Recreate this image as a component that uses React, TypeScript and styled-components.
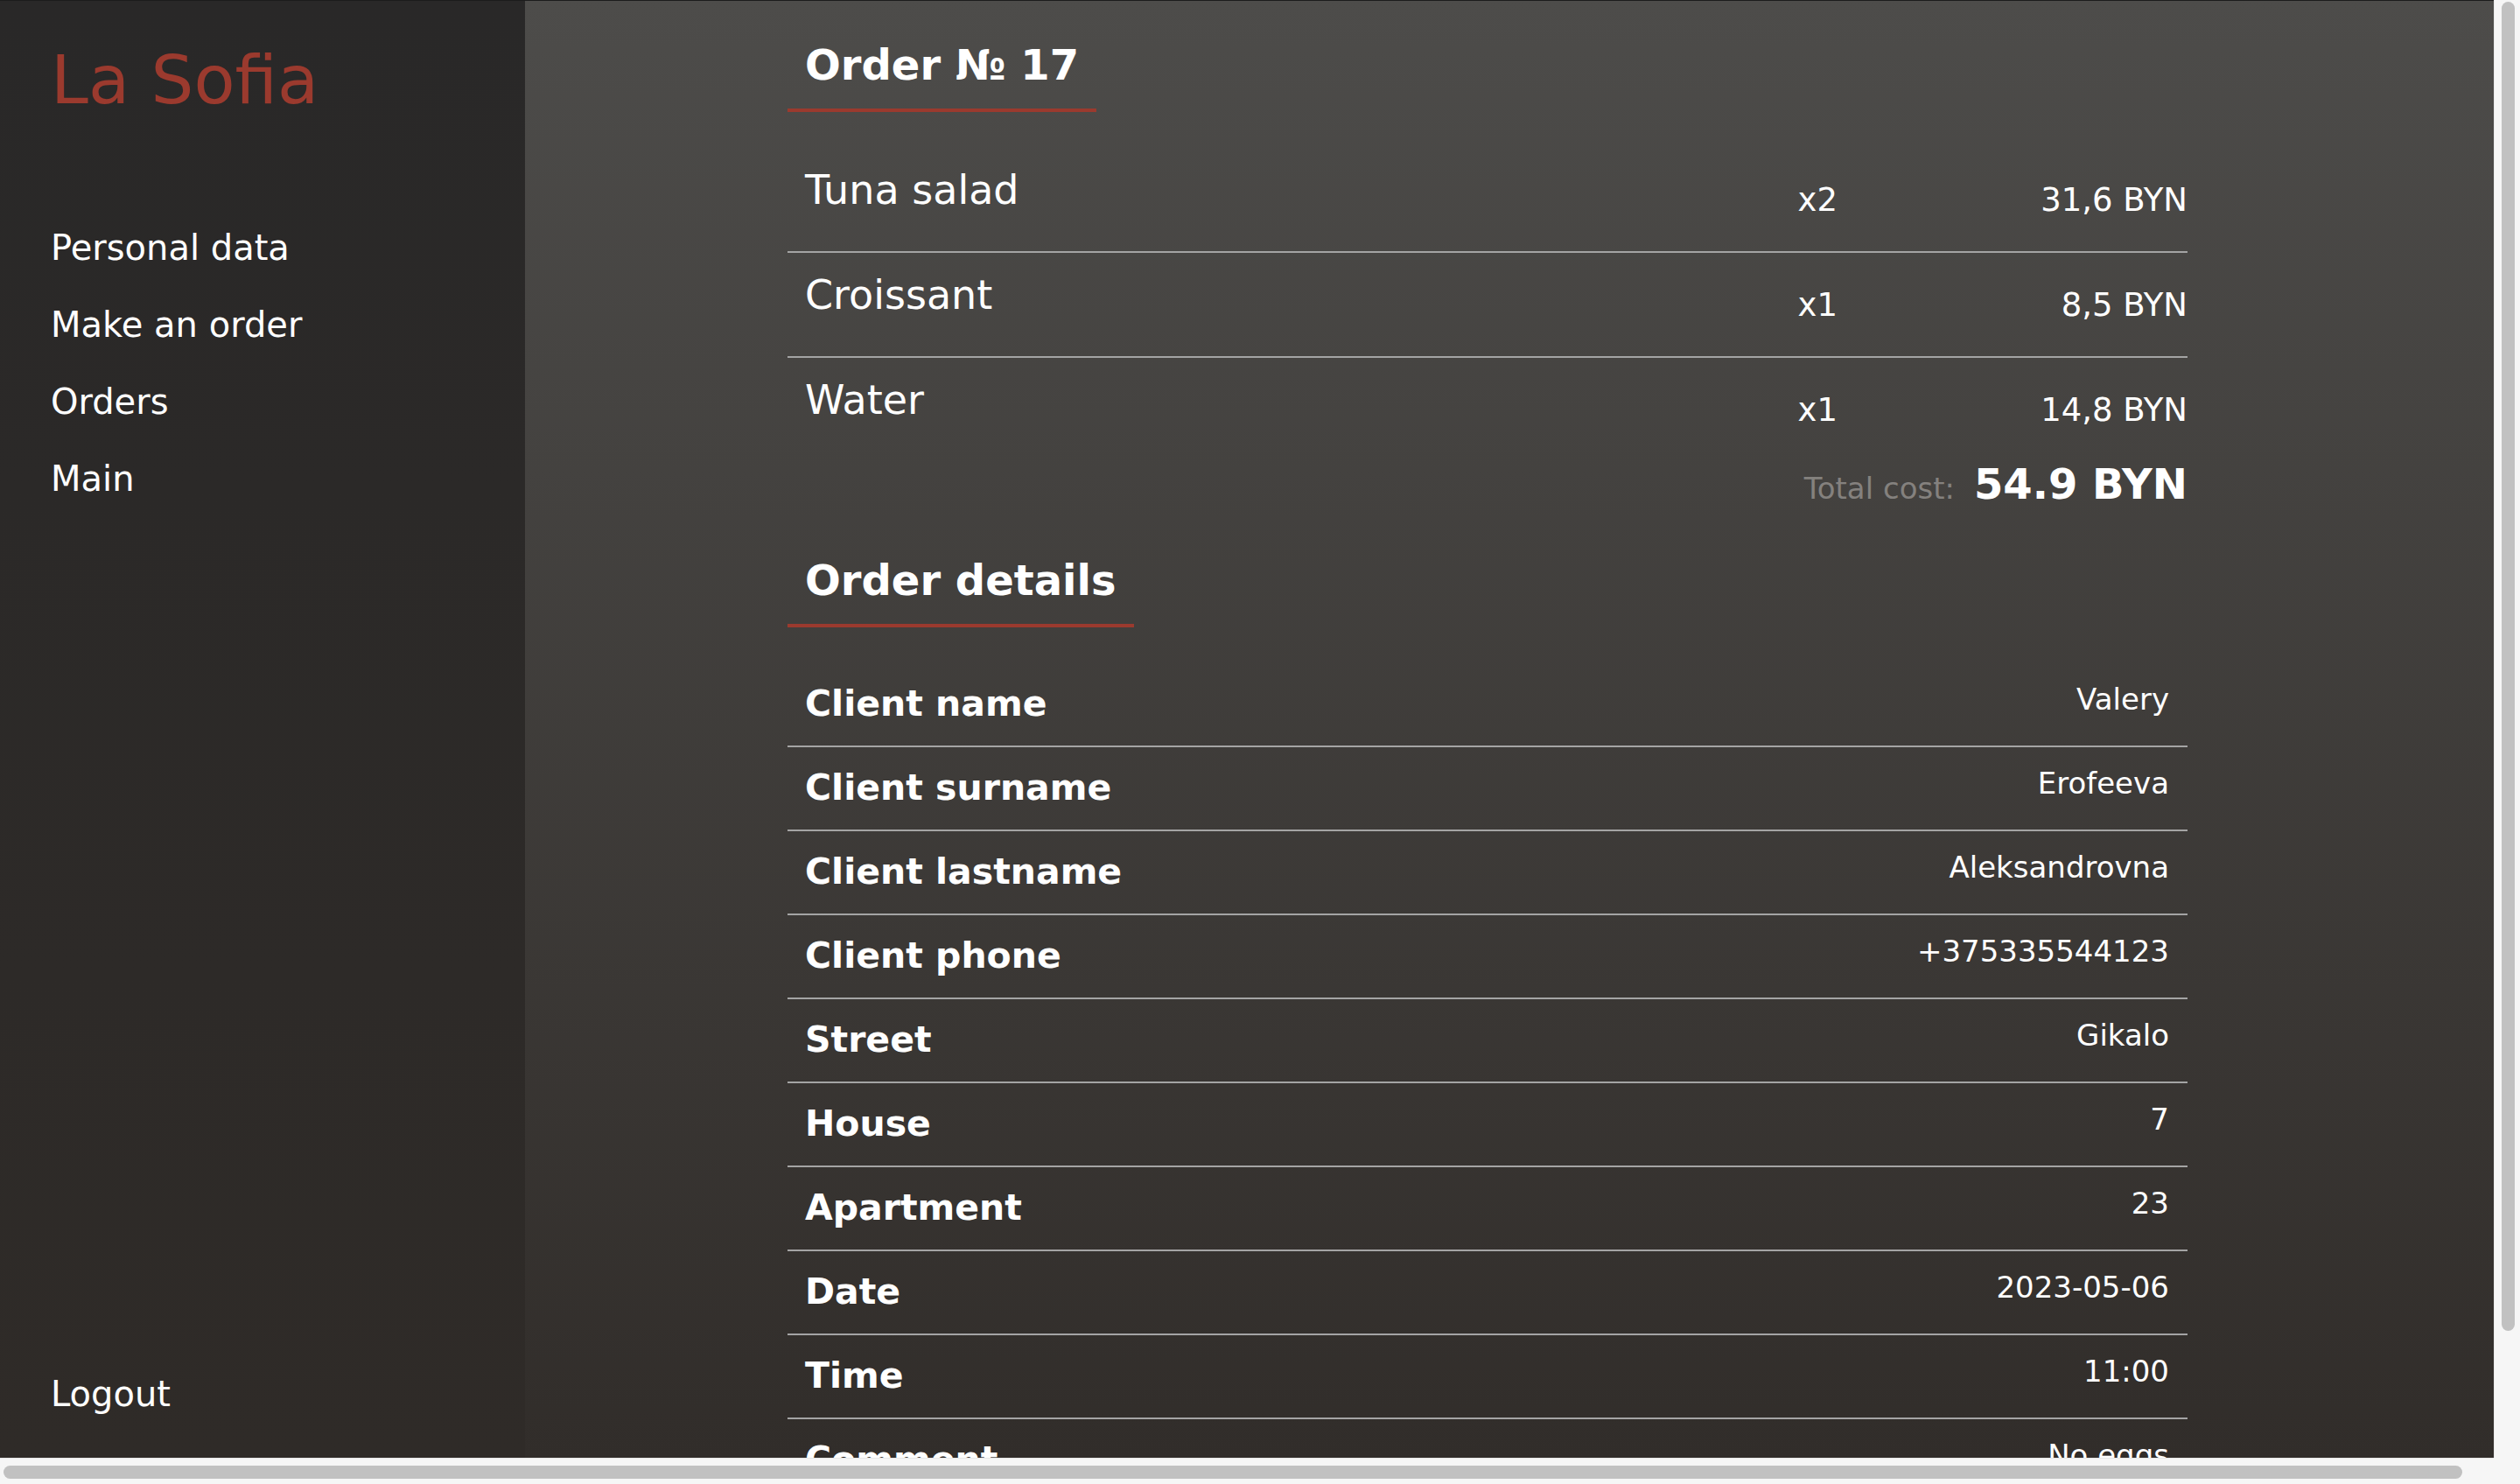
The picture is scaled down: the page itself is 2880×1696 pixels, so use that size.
import React from 'react';
import styled, { createGlobalStyle } from 'styled-components';

const colors = {
  accent: '#9b3a2e',
  divider: '#a4a4a4',
  muted: '#84817e',
  white: '#ffffff',
  track: '#f6f6f6',
  thumb: '#c1c1c1',
};

const orderItems = [
  { name: 'Tuna salad', qty: 2, price: '31,6' },
  { name: 'Croissant', qty: 1, price: '8,5' },
  { name: 'Water', qty: 1, price: '14,8' },
];

const details = [
  { label: 'Client name', value: 'Valery' },
  { label: 'Client surname', value: 'Erofeeva' },
  { label: 'Client lastname', value: 'Aleksandrovna' },
  { label: 'Client phone', value: '+375335544123' },
  { label: 'Street', value: 'Gikalo' },
  { label: 'House', value: '7' },
  { label: 'Apartment', value: '23' },
  { label: 'Date', value: '2023-05-06' },
  { label: 'Time', value: '11:00' },
  { label: 'Comment', value: 'No eggs' },
];

const navLinks = ['Personal data', 'Make an order', 'Orders', 'Main'];

// the browser scrollbars, drawn over the page since headless hides native ones
const ScrollBars = () => (
  <>
    <VerticalTrack>
      <VerticalThumb />
    </VerticalTrack>
    <HorizontalTrack>
      <HorizontalThumb />
    </HorizontalTrack>
    <ScrollCorner />
  </>
);

export default function App() {
  return (
    <>
      <GlobalStyle />
      <Page>
        <Sidebar>
          <Logo>La Sofia</Logo>
          <Nav>
            {navLinks.map((link) => (
              <NavLink key={link}>{link}</NavLink>
            ))}
          </Nav>
          <LogoutLink>Logout</LogoutLink>
        </Sidebar>

        <Main>
          <Content>
            <SectionTitle>Order № 17</SectionTitle>

            <ItemList>
              {orderItems.map((item) => (
                <ItemRow key={item.name}>
                  <ItemName>{item.name}</ItemName>
                  <ItemQty>x{item.qty}</ItemQty>
                  <ItemPrice>{item.price} BYN</ItemPrice>
                </ItemRow>
              ))}
            </ItemList>

            <TotalRow>
              <TotalLabel>Total cost:</TotalLabel>
              <TotalValue>54.9 BYN</TotalValue>
            </TotalRow>

            <SectionTitle $spaced>Order details</SectionTitle>

            <DetailList>
              {details.map((row) => (
                <DetailRow key={row.label}>
                  <DetailLabel>{row.label}</DetailLabel>
                  <DetailValue>{row.value}</DetailValue>
                </DetailRow>
              ))}
            </DetailList>
          </Content>
        </Main>
      </Page>
      <ScrollBars />
    </>
  );
}

const GlobalStyle = createGlobalStyle`
  html, body {
    margin: 0;
    padding: 0;
  }

  body {
    font-family: "DejaVu Sans", "Liberation Sans", sans-serif;
    color: ${colors.white};
    background: #2f2b28;
  }
`;

const Page = styled.div`
  display: flex;
  width: 2890px;
  border-top: 1px solid #1c1c1c;
`;

const Sidebar = styled.aside`
  position: sticky;
  top: 0;
  flex: 0 0 600px;
  height: 100vh;
  box-sizing: border-box;
  display: flex;
  flex-direction: column;
  padding: 52px 0 84px 58px;
  background: linear-gradient(180deg, #292828 0px, #2f2b28 1666px);
`;

const Logo = styled.div`
  font-size: 77px;
  line-height: 1;
  color: ${colors.accent};
`;

const Nav = styled.nav`
  display: flex;
  flex-direction: column;
  gap: 48px;
  margin-top: 133px;
`;

const NavLink = styled.a`
  font-size: 40px;
  line-height: 1;
  color: ${colors.white};
  cursor: pointer;
`;

const LogoutLink = styled(NavLink)`
  margin-top: auto;
`;

const Main = styled.main`
  flex: 1;
  padding: 49px 0 108px 300px;
  background: linear-gradient(180deg, #4d4c4a 0px, #312d2a 1666px);
`;

const Content = styled.div`
  width: 1600px;
  display: flex;
  flex-direction: column;
`;

const SectionTitle = styled.h2<{ $spaced?: boolean }>`
  width: fit-content;
  margin: ${(p) => (p.$spaced ? '62px' : '0')} 0 0;
  padding: 0 20px 26px;
  font-size: 48px;
  line-height: 1;
  font-weight: 700;
  border-bottom: 4px solid ${colors.accent};
`;

const ItemList = styled.div`
  margin-top: 41px;
`;

const ItemRow = styled.div`
  display: flex;
  align-items: flex-start;
  height: 120px;
  box-sizing: border-box;
  padding: 25px 0 0 20px;
  border-bottom: 2px solid ${colors.divider};

  &:last-child {
    border-bottom-color: transparent;
  }
`;

const ItemName = styled.span`
  flex: 1;
  font-size: 46px;
  line-height: 1;
`;

const ItemQty = styled.span`
  width: 200px;
  margin-top: 16px;
  text-align: right;
  font-size: 37px;
  line-height: 1;
`;

const ItemPrice = styled(ItemQty)`
  width: 400px;
`;

const TotalRow = styled.div`
  display: flex;
  justify-content: flex-end;
  align-items: baseline;
  gap: 22px;
`;

const TotalLabel = styled.span`
  font-size: 34px;
  line-height: 1;
  color: ${colors.muted};
`;

const TotalValue = styled.span`
  font-size: 48px;
  line-height: 1;
  font-weight: 700;
`;

const DetailList = styled.div`
  margin-top: 41px;
`;

const DetailRow = styled.div`
  display: flex;
  justify-content: space-between;
  align-items: flex-start;
  height: 96px;
  box-sizing: border-box;
  padding: 24px 21px 0 20px;
  border-bottom: 2px solid ${colors.divider};

  &:last-child {
    border-bottom-color: transparent;
  }
`;

const DetailLabel = styled.span`
  padding-top: 2px;
  font-size: 41px;
  line-height: 1;
  font-weight: 700;
`;

const DetailValue = styled.span`
  font-size: 34px;
  line-height: 1;
`;

const VerticalTrack = styled.div`
  position: fixed;
  top: 0;
  right: 0;
  bottom: 30px;
  width: 30px;
  box-sizing: border-box;
  padding: 2px 6px 0 8px;
  background: ${colors.track};
  border-left: 1px solid #e8e8e8;
`;

const VerticalThumb = styled.div`
  height: 1519px;
  border-radius: 8px;
  background: ${colors.thumb};
`;

const HorizontalTrack = styled.div`
  position: fixed;
  left: 0;
  right: 30px;
  bottom: 0;
  height: 30px;
  box-sizing: border-box;
  padding: 8px 0 6px 4px;
  background: ${colors.track};
  border-top: 1px solid #e8e8e8;
`;

const HorizontalThumb = styled.div`
  width: 2810px;
  height: 100%;
  border-radius: 8px;
  background: ${colors.thumb};
`;

const ScrollCorner = styled.div`
  position: fixed;
  right: 0;
  bottom: 0;
  width: 30px;
  height: 30px;
  background: ${colors.track};
`;
